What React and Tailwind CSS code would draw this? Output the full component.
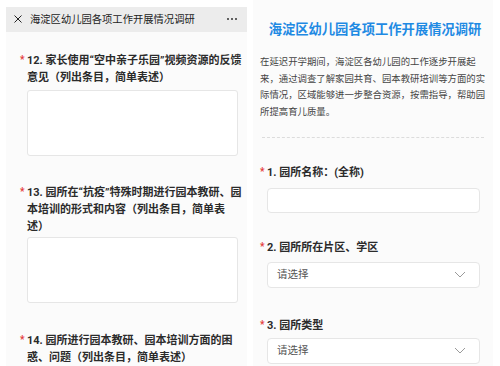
import React from "react";

const font = { fontFamily: 'Roboto, "Noto Sans CJK SC", sans-serif' };

function Label({ lines, className = "" }) {
  return (
    <div className={"relative text-[11px] leading-[17px] font-bold text-[#2b2b2b] " + className}>
      <span className="absolute left-[-7px] top-[-1px] text-[10px] text-[#e4393c]">*</span>
      {lines.map((l, i) => (
        <div key={i} className="whitespace-nowrap">{l}</div>
      ))}
    </div>
  );
}

function Chevron() {
  return (
    <svg width="12" height="7" viewBox="0 0 12 7" fill="none">
      <path d="M1 1 L6 6 L11 1" stroke="#9a9a9a" strokeWidth="1" />
    </svg>
  );
}

function Select({ className = "" }) {
  return (
    <div className={"h-[26px] w-[213px] bg-white border border-[#e6e6e6] rounded-[4px] flex items-center justify-between pl-[9px] pr-[13px] " + className}>
      <span className="text-[10.5px] text-[#555]">请选择</span>
      <Chevron />
    </div>
  );
}

export default function App() {
  return (
    <div className="w-[500px] h-[366px] bg-white flex overflow-hidden" style={font}>
      {/* Left panel */}
      <div className="ml-[6px] mt-[7px] w-[241px] flex flex-col bg-[#fbfbfb]">
        <div className="h-[27px] bg-[#ececec] flex items-center pl-[8px] pr-[10px]">
          <svg width="8" height="8" viewBox="0 0 8 8" className="shrink-0">
            <path d="M0.5 0.5 L7.5 7.5 M7.5 0.5 L0.5 7.5" stroke="#222" strokeWidth="1" />
          </svg>
          <span className="ml-[8px] text-[10.3px] text-[#222] whitespace-nowrap">海淀区幼儿园各项工作开展情况调研</span>
          <span className="ml-auto flex gap-[2px] items-center">
            <span className="w-[2px] h-[2px] rounded-full bg-[#333]" />
            <span className="w-[2px] h-[2px] rounded-full bg-[#333]" />
            <span className="w-[2px] h-[2px] rounded-full bg-[#333]" />
          </span>
        </div>
        <div className="pl-[21px] flex flex-col">
          <Label className="mt-[20px]" lines={["12. 家长使用“空中亲子乐园”视频资源的反馈", "意见（列出条目，简单表述）"]} />
          <div className="mt-[4px] h-[66px] w-[211px] bg-white border border-[#e6e6e6] rounded-[3px]" />
          <Label className="mt-[28.5px]" lines={["13. 园所在“抗疫”特殊时期进行园本教研、园", "本培训的形式和内容（列出条目，简单表", "述）"]} />
          <div className="mt-[1.5px] h-[66px] w-[211px] bg-white border border-[#e6e6e6] rounded-[3px]" />
          <Label className="mt-[29.5px]" lines={["14. 园所进行园本教研、园本培训方面的困", "惑、问题（列出条目，简单表述）"]} />
        </div>
      </div>

      {/* Right panel */}
      <div className="ml-[6px] w-[240px] h-full bg-[#fbfbfb] flex flex-col">
        <div className="mt-[20px] text-center text-[13.3px] leading-[20px] font-bold text-[#1f8ae3] whitespace-nowrap pl-[4px]">
          海淀区幼儿园各项工作开展情况调研
        </div>
        <div className="mt-[14px] pl-[7px] text-[9.4px] leading-[16.7px] text-[#444]">
          <div className="whitespace-nowrap">在延迟开学期间，海淀区各幼儿园的工作逐步开展起</div>
          <div className="whitespace-nowrap">来，通过调查了解家园共育、园本教研培训等方面的实</div>
          <div className="whitespace-nowrap">际情况，区域能够进一步整合资源，按需指导，帮助园</div>
          <div className="whitespace-nowrap">所提高育儿质量。</div>
        </div>
        <div className="mt-[16px] mx-[9px] border-t border-dashed border-[#dcdcdc]" />
        <div className="pl-[14px] flex flex-col">
          <Label className="mt-[26px]" lines={["1. 园所名称：(全称)"]} />
          <div className="mt-[7px] h-[25px] w-[213px] bg-white border border-[#e6e6e6] rounded-[4px]" />
          <Label className="mt-[26px]" lines={["2. 园所所在片区、学区"]} />
          <Select className="mt-[6px]" />
          <Label className="mt-[29px]" lines={["3. 园所类型"]} />
          <Select className="mt-[4px]" />
        </div>
      </div>
    </div>
  );
}
